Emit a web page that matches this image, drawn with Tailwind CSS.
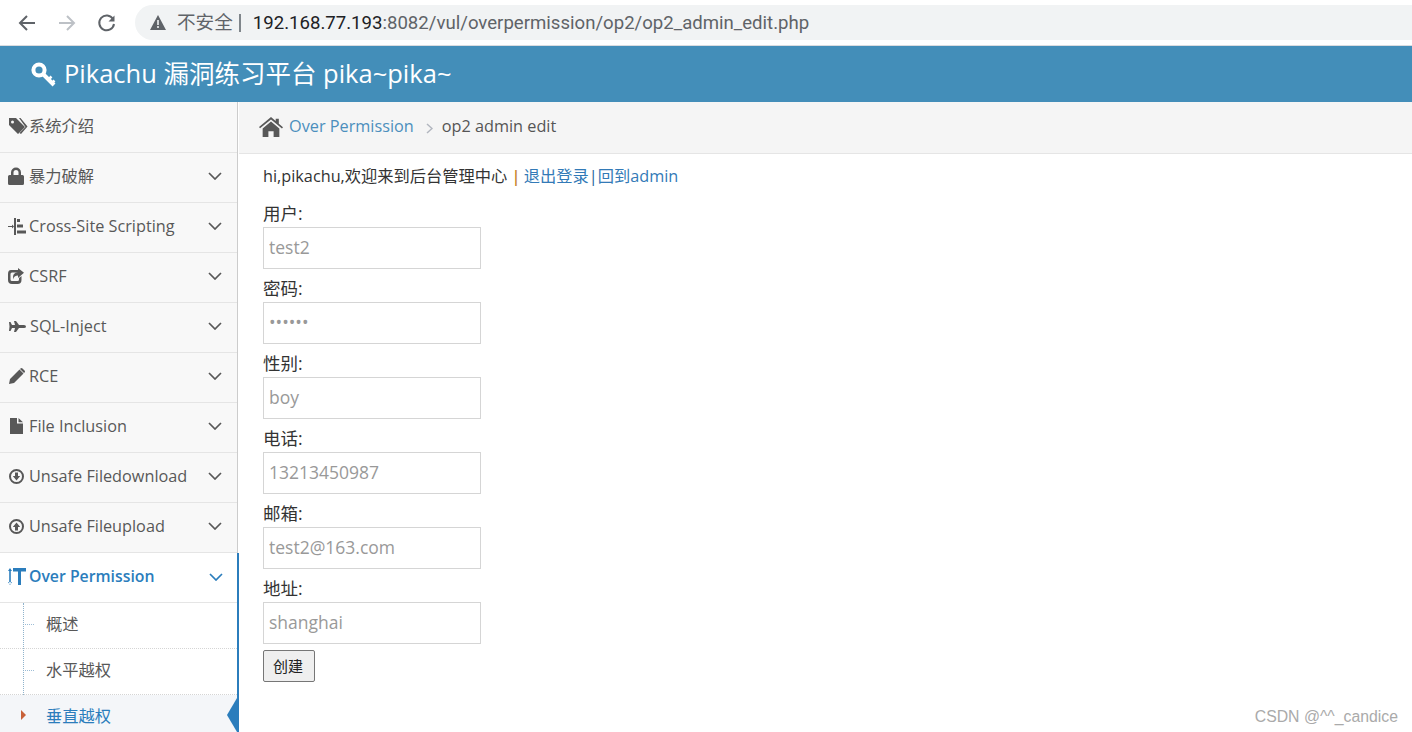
<!DOCTYPE html>
<html lang="zh-CN">
<head>
  <meta charset="UTF-8" />
  <title>Pikachu</title>
  <script src="https://cdn.jsdelivr.net/npm/@tailwindcss/browser@4"></script>
</head>
<body class="relative h-[732px] w-[1412px] overflow-hidden bg-white font-['Open_Sans','Noto_Sans_CJK_SC',sans-serif] text-[16.25px] text-[#393939]">

  <!-- browser bar -->
  <div class="flex h-[46px] items-center border-b border-[#dadce0] bg-white">
    <div class="flex w-[135px] items-center pl-[17px]">
      <svg class="w-[20px] h-[20px]" viewBox="0 0 20 20" fill="none" stroke="#5f6368" stroke-width="2"><path d="M18 10H3M10 3l-7 7 7 7"/></svg>
      <svg class="ml-[20px] w-[20px] h-[20px]" viewBox="0 0 20 20" fill="none" stroke="#bdc1c6" stroke-width="2"><path d="M2 10h15M10 3l7 7-7 7"/></svg>
      <svg class="ml-[20px] w-[20px] h-[20px]" viewBox="0 0 20 20" fill="none" stroke="#5f6368" stroke-width="2"><path d="M16 6a7.4 7.4 0 1 0 1 5"/><path d="M17.5 2.5v6h-6" fill="#5f6368" stroke="none"/></svg>
    </div>
    <div class="flex h-[35px] flex-1 items-center rounded-l-full bg-[#f1f3f4] pl-[15px] font-['Roboto','Noto_Sans_CJK_SC',sans-serif] text-[18.6px]">
      <svg class="w-[16px] h-[15px]" viewBox="0 0 16 15"><path d="M8 0l8 15H0z" fill="#5f6368"/><path d="M7.2 5h1.6v5H7.2zM7.2 11h1.6v2H7.2z" fill="#f1f3f4"/></svg>
      <span class="ml-[11px] mt-[2px] text-[#5f6368]">不安全</span>
      <span class="ml-[6px] h-[18px] w-[2px] bg-[#80868b]"></span>
      <span class="ml-[12px] mt-[2px] text-[#202124]">192.168.77.193</span><span class="mt-[2px] text-[#5f6368]">:8082/vul/overpermission/op2/op2_admin_edit.php</span>
    </div>
  </div>

  <!-- pikachu header -->
  <div class="flex h-[56px] items-center bg-[#438eb9] pl-[31px] text-[25.5px] text-white">
    <svg class="w-[25px] h-[25px]" viewBox="0 0 25 25" fill="none" stroke="#fff"><circle cx="8" cy="8" r="5.600" stroke-width="4"/><path d="M12 12l11 11" stroke-width="4"/><path d="M17.500 17.500l3-3M21 21l2.500-2.500" stroke-width="2.500"/></svg>
    <span class="ml-[8px] pb-[2px]">Pikachu 漏洞练习平台 pika~pika~</span>
  </div>

  <div class="flex h-[630px]">
    <!-- sidebar -->
    <div class="w-[239px] shrink-0 bg-white text-[#585858]">
      <div class="w-[238px] border-r border-[#ccc] bg-[#f8f8f8]">
        <div class="flex h-[51px] items-center border-b border-[#e5e5e5] pl-[8px] pb-[2px]">
          <svg class="w-[20px] h-[18px]" viewBox="0 0 20 18" fill="#585858"><path fill-rule="evenodd" d="M1 1h7l9 9-7 7-9-9zM4.500 3.500a1.500 1.500 0 1 0 0 3 1.500 1.500 0 0 0 0-3z"/><path d="M11 1h1.500l7 8.500L13 17l-1.500-1 6-6z"/></svg>
          <span class="ml-[1px]">系统介绍</span>
        </div>
        <div class="flex h-[50px] items-center border-b border-[#e5e5e5] pl-[8px] pb-[3px]">
          <svg class="w-[16px] h-[18px]" viewBox="0 0 16 18" fill="#585858"><path d="M3 8V5.500a5 5 0 0 1 10 0V8h1.500q1.500 0 1.500 1.500v7q0 1.500-1.500 1.500h-13Q0 18 0 16.500v-7Q0 8 1.500 8zm2.500 0h5V5.500a2.500 2.500 0 0 0-5 0z"/></svg>
          <span class="ml-[5px] flex-1">暴力破解</span>
          <svg class="mr-[15px] w-[14px] h-[8px]" viewBox="0 0 14 8" fill="none" stroke="#585858" stroke-width="1.700"><path d="M1 1l6 6 6-6"/></svg>
        </div>
        <div class="flex h-[50px] items-center border-b border-[#e5e5e5] pl-[8px] pb-[3px]">
          <svg class="w-[18px] h-[17px]" viewBox="0 0 18 17" fill="#585858"><path d="M0 8h4V6.500L6 8.500 4 10.500V9H0zM6 0h2v17H6zM9 1h3v3H9zM9 6.500h6v3H9zM9 12.500h9v3H9z"/></svg>
          <span class="ml-[3px] flex-1">Cross-Site Scripting</span>
          <svg class="mr-[15px] w-[14px] h-[8px]" viewBox="0 0 14 8" fill="none" stroke="#585858" stroke-width="1.700"><path d="M1 1l6 6 6-6"/></svg>
        </div>
        <div class="flex h-[50px] items-center border-b border-[#e5e5e5] pl-[8px] pb-[3px]">
          <svg class="w-[16px] h-[16px]" viewBox="0 0 16 16" fill="#585858"><path d="M3 2h7v2.500H4Q2.500 4.500 2.500 6v5.500Q2.500 13 4 13h5.500q1.500 0 1.500-1.500V10l2.500-2V12q0 4-4 4H4q-4 0-4-4V6q0-4 3-4z"/><path d="M10 0l6 4.800L10 10V7.500Q6 7.500 5 11.500q-1-7 5-7.500z"/></svg>
          <span class="ml-[5px] flex-1">CSRF</span>
          <svg class="mr-[15px] w-[14px] h-[8px]" viewBox="0 0 14 8" fill="none" stroke="#585858" stroke-width="1.700"><path d="M1 1l6 6 6-6"/></svg>
        </div>
        <div class="flex h-[50px] items-center border-b border-[#e5e5e5] pl-[9px] pb-[3px]">
          <svg class="w-[17px] h-[11px]" viewBox="0 0 17 11" fill="#585858"><path d="M0 1h1.500L3 4h3L5 0h2l3 4h5q2 0 2 1.500T15 7h-5l-3 4H5l1-4H3L1.500 10H0l.5-4.500z"/></svg>
          <span class="ml-[4px] flex-1">SQL-Inject</span>
          <svg class="mr-[15px] w-[14px] h-[8px]" viewBox="0 0 14 8" fill="none" stroke="#585858" stroke-width="1.700"><path d="M1 1l6 6 6-6"/></svg>
        </div>
        <div class="flex h-[50px] items-center border-b border-[#e5e5e5] pl-[9px] pb-[3px]">
          <svg class="w-[16px] h-[16px]" viewBox="0 0 16 16" fill="#585858"><path d="M0 16l1-5L10.500 1.500l4 4L5 15zM11.500.5q1-1 2 0l2 2q1 1 0 2l-.5.5-4-4z"/></svg>
          <span class="ml-[4px] flex-1">RCE</span>
          <svg class="mr-[15px] w-[14px] h-[8px]" viewBox="0 0 14 8" fill="none" stroke="#585858" stroke-width="1.700"><path d="M1 1l6 6 6-6"/></svg>
        </div>
        <div class="flex h-[50px] items-center border-b border-[#e5e5e5] pl-[10px] pb-[3px]">
          <svg class="w-[13px] h-[16px]" viewBox="0 0 13 16" fill="#585858"><path d="M0 0h7v5.500h6V16H0zM8.500 0L13 4.300H8.500z"/></svg>
          <span class="ml-[6px] flex-1">File Inclusion</span>
          <svg class="mr-[15px] w-[14px] h-[8px]" viewBox="0 0 14 8" fill="none" stroke="#585858" stroke-width="1.700"><path d="M1 1l6 6 6-6"/></svg>
        </div>
        <div class="flex h-[50px] items-center border-b border-[#e5e5e5] pl-[9px] pb-[3px]">
          <svg class="w-[15px] h-[15px]" viewBox="0 0 15 15" fill="#585858"><path fill-rule="evenodd" d="M7.500 0a7.500 7.500 0 1 1 0 15 7.500 7.500 0 0 1 0-15zm0 2a5.500 5.500 0 1 0 0 11 5.500 5.500 0 0 0 0-11z"/><path d="M6 3.500h3V7h2.200l-3.700 4.500L3.800 7H6z"/></svg>
          <span class="ml-[5px] flex-1">Unsafe Filedownload</span>
          <svg class="mr-[15px] w-[14px] h-[8px]" viewBox="0 0 14 8" fill="none" stroke="#585858" stroke-width="1.700"><path d="M1 1l6 6 6-6"/></svg>
        </div>
        <div class="flex h-[50px] items-center border-b border-[#e5e5e5] pl-[9px] pb-[3px]">
          <svg class="w-[15px] h-[15px]" viewBox="0 0 15 15" fill="#585858"><path fill-rule="evenodd" d="M7.500 0a7.500 7.500 0 1 1 0 15 7.500 7.500 0 0 1 0-15zm0 2a5.500 5.500 0 1 0 0 11 5.500 5.500 0 0 0 0-11z"/><path d="M6 11.500h3V8h2.200L7.500 3.500 3.800 8H6z"/></svg>
          <span class="ml-[5px] flex-1">Unsafe Fileupload</span>
          <svg class="mr-[15px] w-[14px] h-[8px]" viewBox="0 0 14 8" fill="none" stroke="#585858" stroke-width="1.700"><path d="M1 1l6 6 6-6"/></svg>
        </div>
      </div>

      <div class="border-r-2 border-[#2b7dbc] bg-white">
        <div class="flex h-[50px] items-center border-b border-[#e5e5e5] pl-[8px] pb-[2px] text-[15.8px] font-semibold text-[#2b7dbc]">
          <svg class="w-[18px] h-[17px]" viewBox="0 0 18 17" fill="#2b7dbc"><path d="M1.200 1h1.600v15H1.200zM0 3l2-3 2 3zM0 14l2 3 2-3zM5 0h13v3.500h-5V17h-3V3.500H5z"/></svg>
          <span class="ml-[3px] flex-1">Over Permission</span>
          <svg class="mr-[14px] w-[14px] h-[8px]" viewBox="0 0 14 8" fill="none" stroke="#2b7dbc" stroke-width="1.700"><path d="M1 1l6 6 6-6"/></svg>
        </div>
        <!-- submenu -->
        <div class="relative h-[130px]">
          <div class="absolute left-[23px] top-0 h-full border-l border-dotted border-[#8fb3cc]"></div>
          <div class="flex h-[46px] items-center border-b border-dotted border-[#d5d5d5] pl-[46px] pb-[2px]">
            <span class="absolute left-[25px] w-[9px] border-t border-dotted border-[#9dbdd6]"></span>
            <span>概述</span>
          </div>
          <div class="flex h-[46px] items-center border-b border-dotted border-[#d5d5d5] pl-[46px] pb-[2px]">
            <span class="absolute left-[25px] w-[9px] border-t border-dotted border-[#9dbdd6]"></span>
            <span>水平越权</span>
          </div>
          <div class="relative flex h-[38px] items-center bg-[#f4f6f9] pl-[46px] pt-[4px] text-[#2b7dbc]">
            <span class="absolute left-[21px] top-[15px] h-0 w-0 border-y-[5px] border-l-[5px] border-y-transparent border-l-[#c86139]"></span>
            <span>垂直越权</span>
            <span class="absolute right-0 top-[3px] h-0 w-0 border-y-[17px] border-r-[10px] border-y-transparent border-r-[#2b7dbc]"></span>
          </div>
        </div>
      </div>
    </div>

    <!-- main -->
    <div class="min-w-0 flex-1">
      <div class="flex h-[52px] items-center border-b border-[#e5e5e5] bg-[#f5f5f5] pl-[20px] pb-[2px] text-[#555]">
        <svg class="w-[24px] h-[20px]" viewBox="0 0 23 19" fill="#585858"><path d="M11.500 0L16 3.800V1.500h3v4.900l4 3.400-1 1.200-10.500-8.800L1 10.800 0 9.600z"/><path d="M3.500 11l8-6.700 8 6.700v8H14v-5.500H9V19H3.500z"/></svg>
        <span class="ml-[6px] text-[#4c8fbd]">Over Permission</span>
        <svg class="ml-[12px] mt-[3px] w-[7px] h-[11px]" viewBox="0 0 7 11" fill="none" stroke="#b2b6bf" stroke-width="1.500"><path d="M1 1l5 4.500L1 10"/></svg>
        <span class="ml-[9px]">op2 admin edit</span>
      </div>

      <div class="pl-[24px] pt-[10px]">
        <div class="h-[24px] leading-[24px] text-[#333]">hi,pikachu,欢迎来到后台管理中心 <span class="font-semibold text-[#c4822a]">|</span> <a class="-ml-[1px] text-[#337ab7]">退出登录</a><span class="text-[#1f5f94]">|</span><a class="text-[#337ab7]">回到admin</a></div>
        <form class="pt-[12px] text-[17.5px]">
          <div class="mt-[2px] h-[25px] leading-[23px] text-[#333]">用户:</div>
          <input class="block h-[42px] w-[218px] border border-[#d5d5d5] px-[5px] pb-[2px] placeholder:text-[#999]" placeholder="test2" />
          <div class="mt-[8px] h-[25px] leading-[23px] text-[#333]">密码:</div>
          <input type="password" value="123456" class="block h-[42px] w-[218px] border border-[#d5d5d5] px-[5px] pb-[2px] text-[#999]" />
          <div class="mt-[8px] h-[25px] leading-[23px] text-[#333]">性别:</div>
          <input class="block h-[42px] w-[218px] border border-[#d5d5d5] px-[5px] pb-[2px] placeholder:text-[#999]" placeholder="boy" />
          <div class="mt-[8px] h-[25px] leading-[23px] text-[#333]">电话:</div>
          <input class="block h-[42px] w-[218px] border border-[#d5d5d5] px-[5px] pb-[2px] placeholder:text-[#999]" placeholder="13213450987" />
          <div class="mt-[8px] h-[25px] leading-[23px] text-[#333]">邮箱:</div>
          <input class="block h-[42px] w-[218px] border border-[#d5d5d5] px-[5px] pb-[2px] placeholder:text-[#999]" placeholder="test2@163.com" />
          <div class="mt-[8px] h-[25px] leading-[23px] text-[#333]">地址:</div>
          <input class="block h-[42px] w-[218px] border border-[#d5d5d5] px-[5px] pb-[2px] placeholder:text-[#999]" placeholder="shanghai" />
          <button type="button" class="mt-[6px] block h-[32px] w-[52px] rounded-[2px] border border-[#767676] bg-[#efefef] pr-[2px] text-[15px] text-[#222]">创建</button>
        </form>
      </div>
    </div>
  </div>

  <div class="absolute bottom-[3px] right-[14px] font-['Liberation_Sans',sans-serif] text-[15.8px] text-[#aaa]">CSDN @^^_candice</div>
</body>
</html>
